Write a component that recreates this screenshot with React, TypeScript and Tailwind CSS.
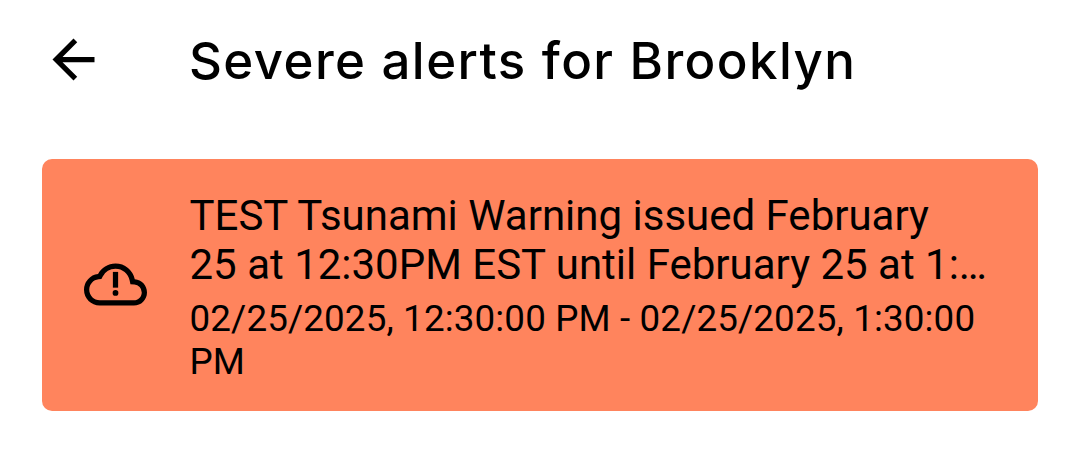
import { MdArrowBack } from "react-icons/md";

const alerts = [
  {
    title: "TEST Tsunami Warning issued February\n25 at 12:30PM EST until February 25 at 1:…",
    period: "02/25/2025, 12:30:00 PM - 02/25/2025, 1:30:00 PM",
  },
];

function CloudAlertIcon() {
  return (
    <svg width="63" height="63" viewBox="0 0 24 24" fill="currentColor">
      <path d="M19.35 10.04A7.49 7.49 0 0 0 12 4C9.11 4 6.6 5.64 5.35 8.04A5.994 5.994 0 0 0 0 14c0 3.31 2.69 6 6 6h13c2.76 0 5-2.24 5-5 0-2.64-2.05-4.78-4.65-4.96zM19 18H6c-2.21 0-4-1.79-4-4 0-2.05 1.53-3.76 3.56-3.97l1.07-.11.5-.95A5.469 5.469 0 0 1 12 6c2.62 0 4.88 1.86 5.39 4.43l.3 1.5 1.53.11A2.98 2.98 0 0 1 22 15c0 1.65-1.35 3-3 3z" />
      <path d="M11 7.2h2v6h-2z" />
      <circle cx="12" cy="15.2" r="1.1" />
    </svg>
  );
}

function AlertCard({ title, period }: { title: string; period: string }) {
  return (
    <div className="flex items-center h-[252px] rounded-[10px] bg-[#ff845d] pl-[42px] pr-[42px]">
      <div className="w-[105.5px] shrink-0 pb-[2px]">
        <CloudAlertIcon />
      </div>
      <div className="min-w-0 flex-1 self-start pt-[32px]">
        <div className="text-[42px] leading-[49px] whitespace-pre">{title}</div>
        <div className="mt-[8px] text-[36.75px] leading-[43px] tracking-[0.14px]">{period}</div>
      </div>
    </div>
  );
}

export default function App() {
  return (
    <div className="w-[1080px] h-[462px] overflow-hidden bg-white text-black font-['Roboto',sans-serif]">
      <header className="flex items-center h-[120px] pl-[42px]">
        <MdArrowBack size={63} className="shrink-0 mb-[2px]" />
        <h1 className="ml-[84px] mt-[2px] text-[51px] leading-[62px] font-medium tracking-[1.42px] font-['Inter',sans-serif]">
          Severe alerts for Brooklyn
        </h1>
      </header>
      <main className="px-[42px] pt-[39px]">
        {alerts.map((a) => (
          <AlertCard key={a.title} {...a} />
        ))}
      </main>
    </div>
  );
}
